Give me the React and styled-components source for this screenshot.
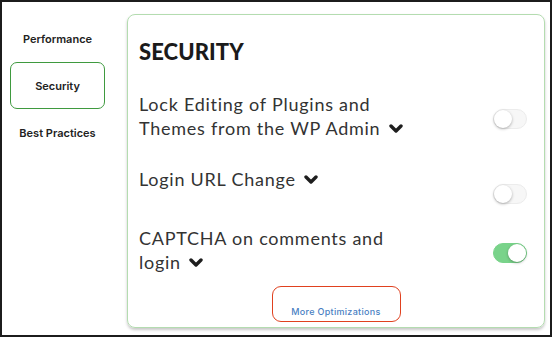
import React from "react";
import styled, { createGlobalStyle } from "styled-components";

const Global = createGlobalStyle`
  html, body { margin: 0; padding: 0; background: #fff; }
  * { box-sizing: border-box; }
`;

const Frame = styled.div`
  width: 552px;
  height: 337px;
  border: 2px solid #1c1c1c;
  display: flex;
  overflow: hidden;
  background: #fff;
`;

const Sidebar = styled.nav`
  width: 125px;
  flex: none;
  padding: 13px 0 0 8px;
  display: flex;
  flex-direction: column;
`;

const NavItem = styled.div`
  width: 95px;
  height: 47px;
  display: flex;
  align-items: center;
  justify-content: center;
  font-family: "Inter", "Noto Sans", sans-serif;
  font-weight: 600;
  font-size: 11px;
  color: #222;
  border-radius: 7px;
  border: 1.5px solid ${(p) => (p.active ? "#3f9a3f" : "transparent")};
`;

const Card = styled.section`
  width: 418px;
  height: 314px;
  margin-top: 12px;
  border: 1px solid #b4dcb0;
  border-radius: 8px;
  box-shadow: 0 2px 3px rgba(0, 0, 0, 0.22);
  padding: 24px 17px 0 11px;
  display: flex;
  flex-direction: column;
`;

const Title = styled.h2`
  margin: 0;
  font-family: "Lato", sans-serif;
  font-weight: 900;
  font-size: 22px;
  line-height: 26px;
  letter-spacing: 0.1px;
  color: #1b1b1b;
`;

const Row = styled.div`
  display: flex;
  align-items: center;
  justify-content: space-between;
  min-height: 48px;
  margin-top: ${(p) => p.gap}px;
`;

const Label = styled.div`
  align-self: flex-start;
  width: 285px;
  font-family: "Lato", sans-serif;
  font-size: 18px;
  line-height: 24px;
  letter-spacing: 0.75px;
  color: #333;
`;

const Chevron = styled.svg`
  width: 14px;
  height: 10px;
  margin-left: 3px;
  vertical-align: 1px;
`;

const Toggle = styled.span`
  position: relative;
  width: 34px;
  height: 20px;
  margin-top: 6px;
  flex: none;
  border-radius: 10px;
  background: ${(p) => (p.on ? "#79d38a" : "#f7f7f7")};
  border: 1px solid ${(p) => (p.on ? "#79d38a" : "#ececec")};

  &::after {
    content: "";
    position: absolute;
    top: 0;
    left: ${(p) => (p.on ? "14px" : "0")};
    width: 18px;
    height: 18px;
    border-radius: 50%;
    background: #fff;
    box-shadow: 0 1px 3px rgba(0, 0, 0, 0.3);
  }
`;

const Footer = styled.div`
  display: flex;
  justify-content: center;
  margin-top: 12px;
  padding-left: 6px;
`;

const MoreButton = styled.button`
  width: 129px;
  height: 36px;
  padding: 15px 0 0;
  background: #fff;
  border: 1.5px solid #e0411f;
  border-radius: 9px;
  font-family: "Inter", "Noto Sans", sans-serif;
  font-size: 9px;
  font-weight: 500;
  letter-spacing: 0.3px;
  color: #4a7fc3;
`;

const items = [
  { text: "Lock Editing of Plugins and Themes from the WP Admin", on: false, gap: 27 },
  { text: "Login URL Change", on: false, gap: 27 },
  { text: "CAPTCHA on comments and login", on: true, gap: 11 },
];

function ChevronDown() {
  return (
    <Chevron viewBox="0 0 14 10">
      <polyline
        points="2,2 7,7 12,2"
        fill="none"
        stroke="#1e1e1e"
        strokeWidth="3.4"
        strokeLinecap="round"
        strokeLinejoin="round"
      />
    </Chevron>
  );
}

export default function App() {
  return (
    <>
      <Global />
      <Frame>
        <Sidebar>
          <NavItem>Performance</NavItem>
          <NavItem active>Security</NavItem>
          <NavItem>Best Practices</NavItem>
        </Sidebar>
        <Card>
          <Title>SECURITY</Title>
          {items.map((it) => (
            <Row key={it.text} gap={it.gap}>
              <Label>
                {it.text} <ChevronDown />
              </Label>
              <Toggle on={it.on ? 1 : 0} />
            </Row>
          ))}
          <Footer>
            <MoreButton>More Optimizations</MoreButton>
          </Footer>
        </Card>
      </Frame>
    </>
  );
}
